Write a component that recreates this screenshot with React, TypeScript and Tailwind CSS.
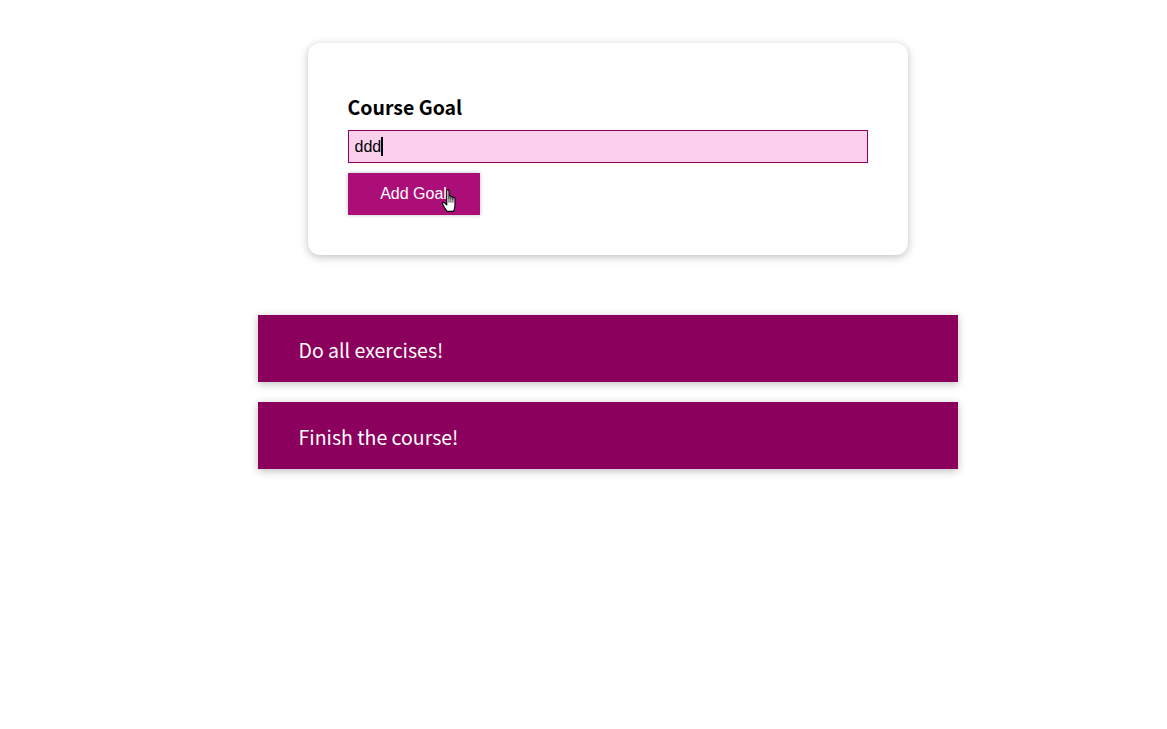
import { FC } from "react";

const goals = [
  { id: "g1", text: "Do all exercises!" },
  { id: "g2", text: "Finish the course!" },
];

const HandCursor: FC = () => (
  <svg
    width="17"
    height="24"
    viewBox="0 0 14 22"
    className="absolute left-[93px] top-[16px] pointer-events-none"
  >
    <path
      d="M4.5 1.5C4.5 0.3 6.5 0.3 6.5 1.5L6.5 8.5L6.5 6.8C6.5 5.8 8.3 5.8 8.3 6.8L8.3 9L8.3 7.6C8.3 6.6 10.1 6.6 10.1 7.6L10.1 9.5L10.1 8.6C10.1 7.6 12 7.6 12 8.6L12 15C12 17.3 11.2 18.8 10.8 20.5L4.6 20.5C3.8 18.7 1.3 15.5 0.7 13.8C0.3 12.5 1.5 11.8 2.4 12.6L4.5 14.6Z"
      fill="#fff"
      stroke="#000"
      strokeWidth="1"
      strokeLinejoin="round"
    />
    <path d="M6.5 8.5L6.5 12.5M8.3 9L8.3 12.5M10.1 9.5L10.1 12.5" stroke="#000" strokeWidth="0.7" />
  </svg>
);

export default function App() {
  return (
    <div className="min-h-[729px] bg-white pl-[48px] pt-[43px] font-['Noto_Sans_CJK_KR','Noto_Sans',sans-serif]">
      <form
        className="mx-auto w-[600px] rounded-[12px] bg-white px-[40px] py-[40px] shadow-[0_2px_8px_rgba(0,0,0,0.26)]"
        onSubmit={(e) => e.preventDefault()}
      >
        <div className="mt-[8px]">
          <label className="block text-[19.5px] font-bold leading-[31px] text-black mb-[8px]">
            Course Goal
          </label>
          <div className="relative">
            <input
              type="text"
              readOnly
              value="ddd"
              className="block h-[33px] w-full border border-[#8b005d] bg-[#fad0ec] px-[6px] font-['Liberation_Sans',Arial,sans-serif] text-[16px] text-black outline-none"
            />
            <span className="absolute left-[33px] top-[7px] h-[19px] w-[2px] bg-black pointer-events-none" />
          </div>
        </div>
        <div className="relative mt-[10px] w-[132px]">
          <button
            type="submit"
            className="block h-[42px] w-[132px] bg-[#ac0e77] font-['Liberation_Sans',Arial,sans-serif] text-[16px] text-white shadow-[0_0_4px_rgba(0,0,0,0.26)]"
          >
            Add Goal
          </button>
          <HandCursor />
        </div>
      </form>

      <ul className="mx-auto mt-[60px] flex w-[700px] flex-col gap-[20px]">
        {goals.map((g) => (
          <li
            key={g.id}
            className="flex h-[67px] items-center bg-[#8b005d] pl-[41px] pt-[3px] text-[19.5px] text-white shadow-[0_2px_8px_rgba(0,0,0,0.26)]"
          >
            {g.text}
          </li>
        ))}
      </ul>
    </div>
  );
}
